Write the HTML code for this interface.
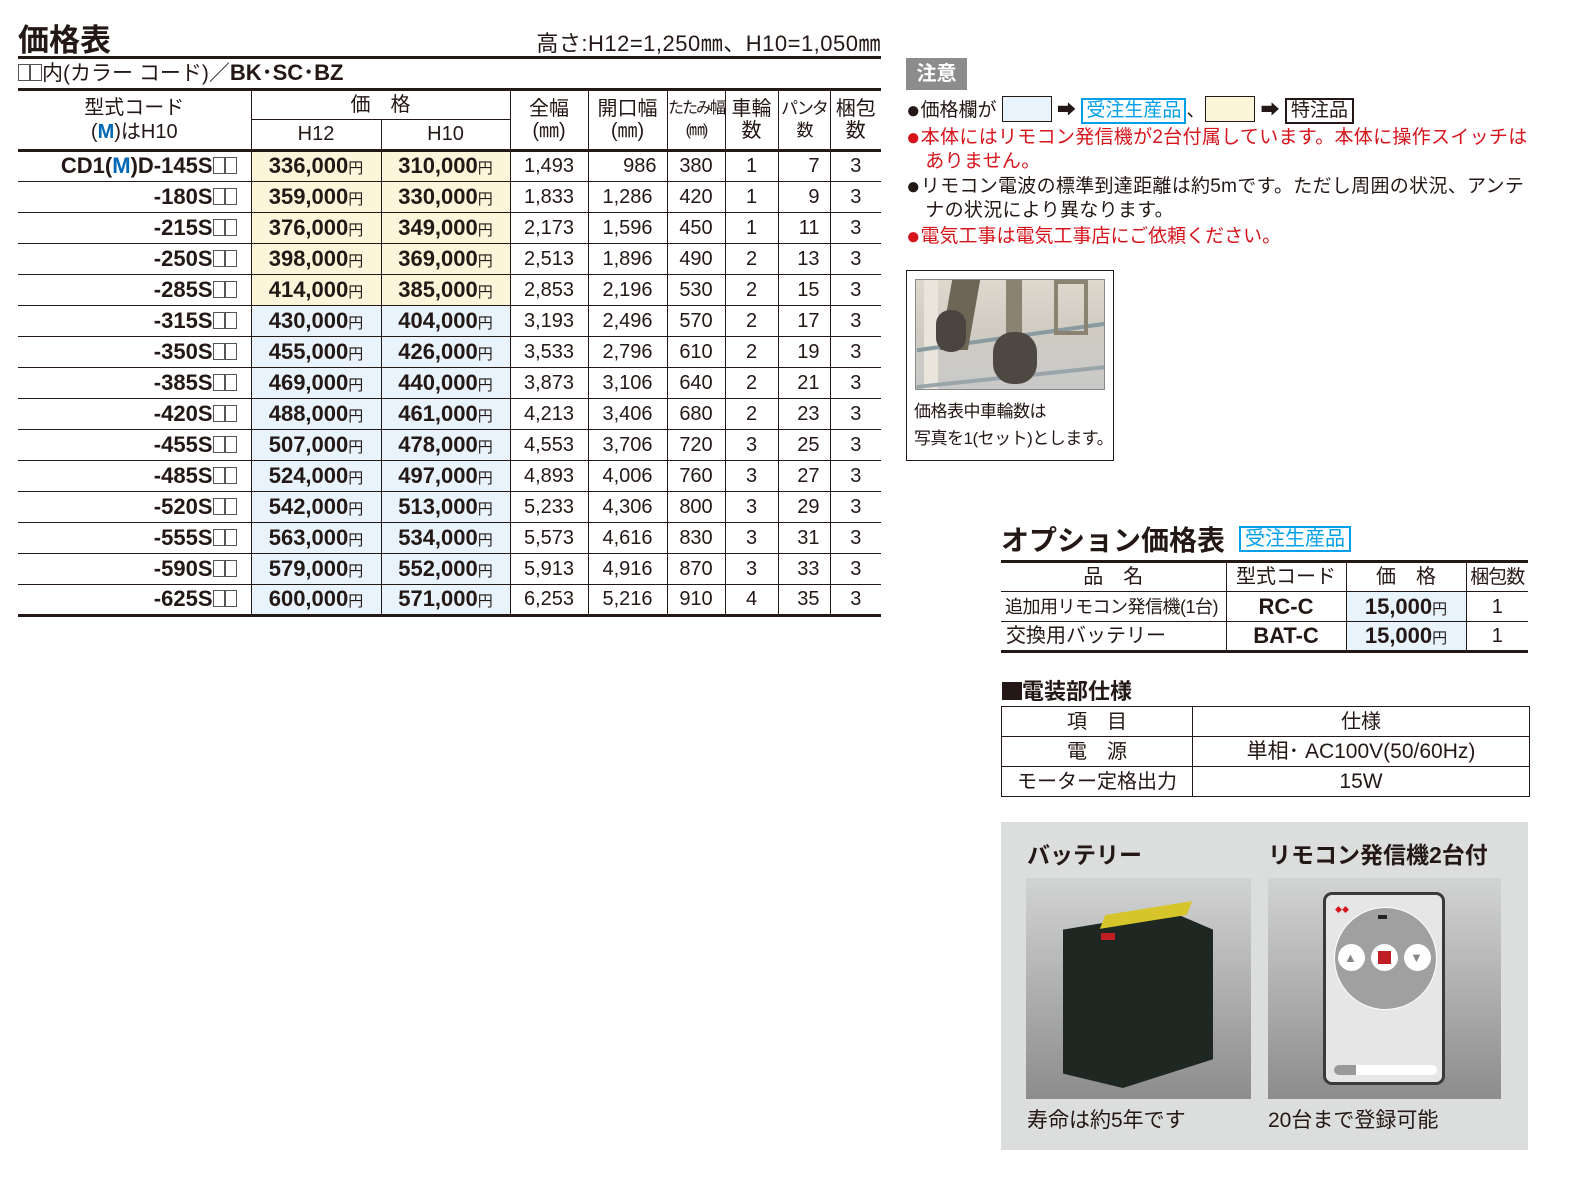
<!DOCTYPE html>
<html><head><meta charset="utf-8"><style>
*{margin:0;padding:0;box-sizing:border-box}
body{width:1574px;height:1178px;background:#fff;position:relative;font-family:"Liberation Sans","Noto Sans CJK JP",sans-serif;color:#231815;overflow:hidden}
.a{position:absolute;white-space:nowrap}
table{border-collapse:collapse;table-layout:fixed;position:absolute}
td{padding:0;text-align:center;vertical-align:middle;white-space:nowrap;overflow:hidden}
#m tbody td{border-left:1px solid #231815;border-bottom:1px solid #231815;font-size:20px;height:31px;line-height:1}
#m tbody td.c{border-left:none;text-align:right;font-weight:bold;font-size:22px;padding-right:14px}
#m .y{background:#fdf5d9;font-weight:bold;font-size:22px}
#m .b{background:#e8f3fc;font-weight:bold;font-size:22px}
small{font-size:15px;font-weight:normal;line-height:1}
#m .r{text-align:right;padding-right:10px}
.sq{display:inline-block;width:12px;height:17px;border:1px solid #555;vertical-align:-1px}
#m thead td{font-size:20px;line-height:22px;font-weight:normal;border-left:1px solid #231815;border-bottom:1px solid #231815}
#m thead td.c{border-left:none}
.red{color:#d7141b}
.o td{border:1px solid #231815;font-size:20px;height:30px;line-height:1}
.bu{font-size:24px;line-height:1;vertical-align:-2px}
</style></head><body>
<div class="a" style="left:18px;top:15px;font-size:31px;font-weight:bold">価格表</div>
<div class="a" style="right:693px;top:26px;font-size:22px;letter-spacing:0.5px">高さ:H12=1,250㎜、H10=1,050㎜</div>
<div class="a" style="left:18px;top:56px;width:863px;height:3px;background:#231815"></div>
<div class="a" style="left:18px;top:61px;font-size:21px;line-height:24px"><span class="sq"></span><span class="sq"></span>内(カラー コード)／<b style="font-size:22px">BK･SC･BZ</b></div>
<div class="a" style="left:18px;top:88px;width:863px;height:3px;background:#231815"></div>
<table id="m" style="left:18px;top:91px;width:863px">
<colgroup><col style="width:233px"><col style="width:130px"><col style="width:129px"><col style="width:78px"><col style="width:79px"><col style="width:58px"><col style="width:53px"><col style="width:52px"><col style="width:51px"></colgroup>
<thead>
<tr><td rowspan="2" class="c" style="height:59px;border-bottom:3px solid #231815;line-height:24px">型式コード<br>(<b style="color:#0068b7">M</b>)はH10</td><td colspan="2" style="height:28px">価　格</td><td rowspan="2" style="border-bottom:3px solid #231815">全幅<br>(㎜)</td><td rowspan="2" style="border-bottom:3px solid #231815">開口幅<br>(㎜)</td><td rowspan="2" style="border-bottom:3px solid #231815;font-size:16px;letter-spacing:-2px">たたみ幅<br>(㎜)</td><td rowspan="2" style="border-bottom:3px solid #231815">車輪<br>数</td><td rowspan="2" style="border-bottom:3px solid #231815;font-size:17px;letter-spacing:-2px">パンタ<br>数</td><td rowspan="2" style="border-bottom:3px solid #231815">梱包<br>数</td></tr>
<tr><td style="height:31px;border-bottom:3px solid #231815">H12</td><td style="border-bottom:3px solid #231815">H10</td></tr>
</thead>
<tbody>
<tr><td class="c">CD1(<span style="color:#0068b7">M</span>)D-145S<span class="sq"></span><span class="sq"></span></td><td class="y">336,000<small>円</small></td><td class="y">310,000<small>円</small></td><td>1,493</td><td class="r">986</td><td>380</td><td>1</td><td class="r">7</td><td>3</td></tr>
<tr><td class="c">-180S<span class="sq"></span><span class="sq"></span></td><td class="y">359,000<small>円</small></td><td class="y">330,000<small>円</small></td><td>1,833</td><td>1,286</td><td>420</td><td>1</td><td class="r">9</td><td>3</td></tr>
<tr><td class="c">-215S<span class="sq"></span><span class="sq"></span></td><td class="y">376,000<small>円</small></td><td class="y">349,000<small>円</small></td><td>2,173</td><td>1,596</td><td>450</td><td>1</td><td class="r">11</td><td>3</td></tr>
<tr><td class="c">-250S<span class="sq"></span><span class="sq"></span></td><td class="y">398,000<small>円</small></td><td class="y">369,000<small>円</small></td><td>2,513</td><td>1,896</td><td>490</td><td>2</td><td class="r">13</td><td>3</td></tr>
<tr><td class="c">-285S<span class="sq"></span><span class="sq"></span></td><td class="y">414,000<small>円</small></td><td class="y">385,000<small>円</small></td><td>2,853</td><td>2,196</td><td>530</td><td>2</td><td class="r">15</td><td>3</td></tr>
<tr><td class="c">-315S<span class="sq"></span><span class="sq"></span></td><td class="b">430,000<small>円</small></td><td class="b">404,000<small>円</small></td><td>3,193</td><td>2,496</td><td>570</td><td>2</td><td class="r">17</td><td>3</td></tr>
<tr><td class="c">-350S<span class="sq"></span><span class="sq"></span></td><td class="b">455,000<small>円</small></td><td class="b">426,000<small>円</small></td><td>3,533</td><td>2,796</td><td>610</td><td>2</td><td class="r">19</td><td>3</td></tr>
<tr><td class="c">-385S<span class="sq"></span><span class="sq"></span></td><td class="b">469,000<small>円</small></td><td class="b">440,000<small>円</small></td><td>3,873</td><td>3,106</td><td>640</td><td>2</td><td class="r">21</td><td>3</td></tr>
<tr><td class="c">-420S<span class="sq"></span><span class="sq"></span></td><td class="b">488,000<small>円</small></td><td class="b">461,000<small>円</small></td><td>4,213</td><td>3,406</td><td>680</td><td>2</td><td class="r">23</td><td>3</td></tr>
<tr><td class="c">-455S<span class="sq"></span><span class="sq"></span></td><td class="b">507,000<small>円</small></td><td class="b">478,000<small>円</small></td><td>4,553</td><td>3,706</td><td>720</td><td>3</td><td class="r">25</td><td>3</td></tr>
<tr><td class="c">-485S<span class="sq"></span><span class="sq"></span></td><td class="b">524,000<small>円</small></td><td class="b">497,000<small>円</small></td><td>4,893</td><td>4,006</td><td>760</td><td>3</td><td class="r">27</td><td>3</td></tr>
<tr><td class="c">-520S<span class="sq"></span><span class="sq"></span></td><td class="b">542,000<small>円</small></td><td class="b">513,000<small>円</small></td><td>5,233</td><td>4,306</td><td>800</td><td>3</td><td class="r">29</td><td>3</td></tr>
<tr><td class="c">-555S<span class="sq"></span><span class="sq"></span></td><td class="b">563,000<small>円</small></td><td class="b">534,000<small>円</small></td><td>5,573</td><td>4,616</td><td>830</td><td>3</td><td class="r">31</td><td>3</td></tr>
<tr><td class="c">-590S<span class="sq"></span><span class="sq"></span></td><td class="b">579,000<small>円</small></td><td class="b">552,000<small>円</small></td><td>5,913</td><td>4,916</td><td>870</td><td>3</td><td class="r">33</td><td>3</td></tr>
<tr><td class="c" style="border-bottom:3px solid #231815">-625S<span class="sq"></span><span class="sq"></span></td><td class="b" style="border-bottom:3px solid #231815">600,000<small>円</small></td><td class="b" style="border-bottom:3px solid #231815">571,000<small>円</small></td><td style="border-bottom:3px solid #231815">6,253</td><td style="border-bottom:3px solid #231815">5,216</td><td style="border-bottom:3px solid #231815">910</td><td style="border-bottom:3px solid #231815">4</td><td class="r" style="border-bottom:3px solid #231815">35</td><td style="border-bottom:3px solid #231815">3</td></tr>
</tbody></table>

<!-- notes -->
<div class="a" style="left:906px;top:58px;width:61px;height:32px;background:#8c8c8c;color:#fff;font-size:20px;font-weight:bold;line-height:32px;text-align:center">注意</div>
<div class="a" style="left:906px;top:96px;font-size:19px;line-height:26px"><span class="bu">●</span>価格欄が <span style="display:inline-block;width:50px;height:26px;border:1px solid #231815;background:#e8f3fc;vertical-align:-6px"></span> ➡ <span style="display:inline-block;border:2px solid #00a0e9;color:#00a0e9;padding:0 3px;line-height:22px">受注生産品</span>、<span style="display:inline-block;width:50px;height:26px;border:1px solid #231815;background:#fdf5d9;vertical-align:-6px"></span> ➡ <span style="display:inline-block;border:2px solid #231815;padding:0 4px;line-height:22px">特注品</span></div>
<div class="a red" style="left:906px;top:126px;font-size:19px;line-height:24px;letter-spacing:0.3px"><span class="bu">●</span>本体にはリモコン発信機が2台付属しています。本体に操作スイッチは<br>　ありません。</div>
<div class="a" style="left:906px;top:175px;font-size:19px;line-height:24px;letter-spacing:0.3px"><span class="bu">●</span>リモコン電波の標準到達距離は約5mです。ただし周囲の状況、アンテ<br>　ナの状況により異なります。</div>
<div class="a red" style="left:906px;top:225px;font-size:19px;line-height:24px"><span class="bu">●</span>電気工事は電気工事店にご依頼ください。</div>

<div class="a" style="left:906px;top:270px;width:208px;height:191px;border:1px solid #231815"></div>
<div class="a" style="left:915px;top:279px;width:190px;height:111px;border:1px solid #888;background:linear-gradient(180deg,#ddd8cc 0%,#cfcbc2 50%,#c9c9c9 100%);overflow:hidden">
<div class="a" style="left:8px;top:0;width:14px;height:111px;background:#e9e5dc"></div>
<div class="a" style="left:0;top:55px;width:190px;height:4px;background:#8a9aa0;transform:rotate(-8deg)"></div>
<div class="a" style="left:0;top:95px;width:190px;height:4px;background:#9aa5aa;transform:rotate(-6deg)"></div>
<div class="a" style="left:30px;top:0;width:28px;height:70px;background:#6d6555;transform:skewX(-10deg)"></div>
<div class="a" style="left:90px;top:0;width:16px;height:70px;background:#8b8371"></div>
<div class="a" style="left:138px;top:0;width:34px;height:55px;border:4px solid #8b8371"></div>
<div class="a" style="left:20px;top:30px;width:30px;height:42px;border-radius:14px;background:#4a4540"></div>
<div class="a" style="left:77px;top:52px;width:44px;height:52px;border-radius:20px;background:#4e4843"></div>
</div>
<div class="a" style="left:914px;top:398px;font-size:17px;line-height:27px;letter-spacing:-0.5px">価格表中車輪数は<br>写真を1(セット)とします。</div>

<!-- option -->
<div class="a" style="left:1001px;top:519px;font-size:28px;font-weight:bold">オプション価格表</div>
<div class="a" style="left:1239px;top:526px;border:2px solid #00a0e9;color:#00a0e9;font-size:20px;line-height:22px;padding:0 4px">受注生産品</div>
<table class="o" style="left:1001px;top:560px;width:527px;border-top:3px solid #231815">
<colgroup><col style="width:225px"><col style="width:120px"><col style="width:120px"><col style="width:62px"></colgroup>
<tr><td style="border-left:none;height:28px">品　名</td><td>型式コード</td><td>価　格</td><td style="border-right:none;font-size:19px;letter-spacing:-1px">梱包数</td></tr>
<tr><td style="border-left:none;text-align:left;padding-left:4px;font-size:18px;letter-spacing:-0.5px">追加用リモコン発信機(1台)</td><td style="font-weight:bold;font-size:22px">RC-C</td><td style="background:#e8f3fc;font-weight:bold;font-size:22px">15,000<small>円</small></td><td style="border-right:none">1</td></tr>
<tr><td style="border-left:none;border-bottom:3px solid #231815;text-align:left;padding-left:5px">交換用バッテリー</td><td style="font-weight:bold;font-size:22px;border-bottom:3px solid #231815">BAT-C</td><td style="background:#e8f3fc;font-weight:bold;font-size:22px;border-bottom:3px solid #231815">15,000<small>円</small></td><td style="border-right:none;border-bottom:3px solid #231815">1</td></tr>
</table>

<div class="a" style="left:1002px;top:674px;font-size:22px;font-weight:bold"><span style="display:inline-block;width:20px;height:18px;background:#231815;vertical-align:-1px"></span>電装部仕様</div>
<table class="o" style="left:1001px;top:706px;width:528px">
<colgroup><col style="width:191px"><col style="width:337px"></colgroup>
<tr><td>項　目</td><td>仕様</td></tr>
<tr><td>電　源</td><td style="font-size:21px">単相･ AC100V(50/60Hz)</td></tr>
<tr><td>モーター定格出力</td><td style="font-size:21px">15W</td></tr>
</table>

<!-- gray panel -->
<div class="a" style="left:1001px;top:822px;width:527px;height:328px;background:#dcdddd"></div>
<div class="a" style="left:1027px;top:836px;font-size:23px;font-weight:bold">バッテリー</div>
<div class="a" style="left:1268px;top:836px;font-size:23px;font-weight:bold">リモコン発信機2台付</div>
<div class="a" style="left:1026px;top:878px;width:225px;height:221px;background:linear-gradient(180deg,#d2d3d3,#8c8c8c);overflow:hidden">
<div class="a" style="left:37px;top:30px;width:150px;height:180px;background:#1f2723;clip-path:polygon(0 12%,72% 2%,100% 12%,100% 84%,40% 100%,0 92%)"></div>
<div class="a" style="left:80px;top:30px;width:80px;height:14px;background:#d6c52a;transform:skewX(-30deg) rotate(-10deg)"></div>
<div class="a" style="left:75px;top:55px;width:14px;height:7px;background:#c01e25"></div>
</div>
<div class="a" style="left:1268px;top:878px;width:233px;height:221px;background:linear-gradient(180deg,#d2d3d3,#8c8c8c)">
<div class="a" style="left:55px;top:14px;width:122px;height:193px;border:3px solid #3a3a3a;border-radius:9px;background:#e6e6e6">
<div class="a" style="left:8px;top:12px;width:103px;height:103px;border-radius:50%;background:#a0a0a0;border:1px solid #fff"></div>
<div class="a" style="left:9px;top:10px;font-size:7px;color:#d7141b">◆◆</div>
<div class="a" style="left:52px;top:20px;width:9px;height:4px;background:#222"></div>
<div class="a" style="left:12px;top:49px;width:27px;height:27px;border-radius:50%;background:#fff"></div>
<div class="a" style="left:45px;top:49px;width:27px;height:27px;border-radius:50%;background:#fff"></div>
<div class="a" style="left:52px;top:56px;width:13px;height:13px;background:#c01e25"></div>
<div class="a" style="left:78px;top:49px;width:27px;height:27px;border-radius:50%;background:#fff"></div>
<div class="a" style="left:18px;top:55px;font-size:13px;color:#888">▲</div>
<div class="a" style="left:84px;top:55px;font-size:13px;color:#888">▼</div>
<div class="a" style="left:8px;top:170px;width:103px;height:10px;border-radius:5px;background:#fff;border-left:22px solid #999"></div>
</div>
</div>
<div class="a" style="left:1027px;top:1104px;font-size:21px">寿命は約5年です</div>
<div class="a" style="left:1268px;top:1104px;font-size:21px">20台まで登録可能</div>
</body></html>
